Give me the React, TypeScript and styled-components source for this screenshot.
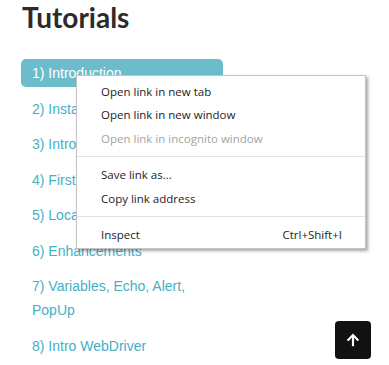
import React from 'react';
import styled, { createGlobalStyle } from 'styled-components';
import { FaArrowUp } from 'react-icons/fa';

const GlobalStyle = createGlobalStyle`
  html, body {
    margin: 0;
    padding: 0;
    background: #ffffff;
  }
`;

const Page = styled.div`
  position: relative;
  width: 389px;
  height: 365px;
  padding: 0 21px;
  box-sizing: border-box;
  overflow: hidden;
`;

const Title = styled.h1`
  margin: 0 0 25px 1px;
  font-family: Lato, 'Open Sans', sans-serif;
  font-size: 28px;
  line-height: 34px;
  font-weight: 700;
  color: #2b2b2b;
`;

const List = styled.ul`
  list-style: none;
  margin: 0;
  padding: 0;
  width: 202px;
  display: flex;
  flex-direction: column;
  gap: 7.5px;
`;

const Item = styled.li<{ $active?: boolean }>`
  padding: 2px 11px;
  border-radius: 5px;
  font-family: 'Liberation Sans', Arial, sans-serif;
  font-size: 14px;
  line-height: 24px;
  color: ${(p) => (p.$active ? '#ffffff' : '#45b0c4')};
  background: ${(p) => (p.$active ? '#6bbdcc' : 'transparent')};
`;

const Menu = styled.div`
  position: absolute;
  left: 76px;
  top: 75px;
  width: 290px;
  padding: 4px 0 2px;
  box-sizing: border-box;
  background: #ffffff;
  border: 1px solid #c4c4c4;
  box-shadow: 2px 2px 3px rgba(0, 0, 0, 0.35);
  font-family: 'Open Sans', sans-serif;
  font-size: 11.5px;
`;

const MenuItem = styled.div<{ $disabled?: boolean }>`
  display: flex;
  justify-content: space-between;
  height: 23.4px;
  line-height: 23.4px;
  padding: 0 23px 0 24px;
  color: ${(p) => (p.$disabled ? '#a3a3a3' : '#1c1c1c')};
`;

const Separator = styled.div`
  height: 1px;
  margin: 6px 0;
  background: #e3e3e3;
`;

const TopButton = styled.button`
  position: absolute;
  right: 18px;
  bottom: 6px;
  width: 36px;
  height: 38px;
  border: none;
  border-radius: 4px;
  background: #111111;
  color: #ffffff;
  display: flex;
  align-items: center;
  justify-content: center;
  padding: 0;
  font-size: 14px;
`;

const items = [
  '1) Introduction',
  '2) Installation',
  '3) Intro IDE',
  '4) First Script',
  '5) Locators',
  '6) Enhancements',
  '7) Variables, Echo, Alert, PopUp',
  '8) Intro WebDriver',
];

const App: React.FC = () => {
  return (
    <>
      <GlobalStyle />
      <Page>
        <Title>Tutorials</Title>
        <List>
          {items.map((text, i) => (
            <Item key={text} $active={i === 0}>
              {text}
            </Item>
          ))}
        </List>

        <Menu>
          <MenuItem>Open link in new tab</MenuItem>
          <MenuItem>Open link in new window</MenuItem>
          <MenuItem $disabled>Open link in incognito window</MenuItem>
          <Separator />
          <MenuItem>Save link as...</MenuItem>
          <MenuItem>Copy link address</MenuItem>
          <Separator />
          <MenuItem>
            <span>Inspect</span>
            <span>Ctrl+Shift+I</span>
          </MenuItem>
        </Menu>

        <TopButton aria-label="Back to top">
          <FaArrowUp />
        </TopButton>
      </Page>
    </>
  );
};

export default App;
